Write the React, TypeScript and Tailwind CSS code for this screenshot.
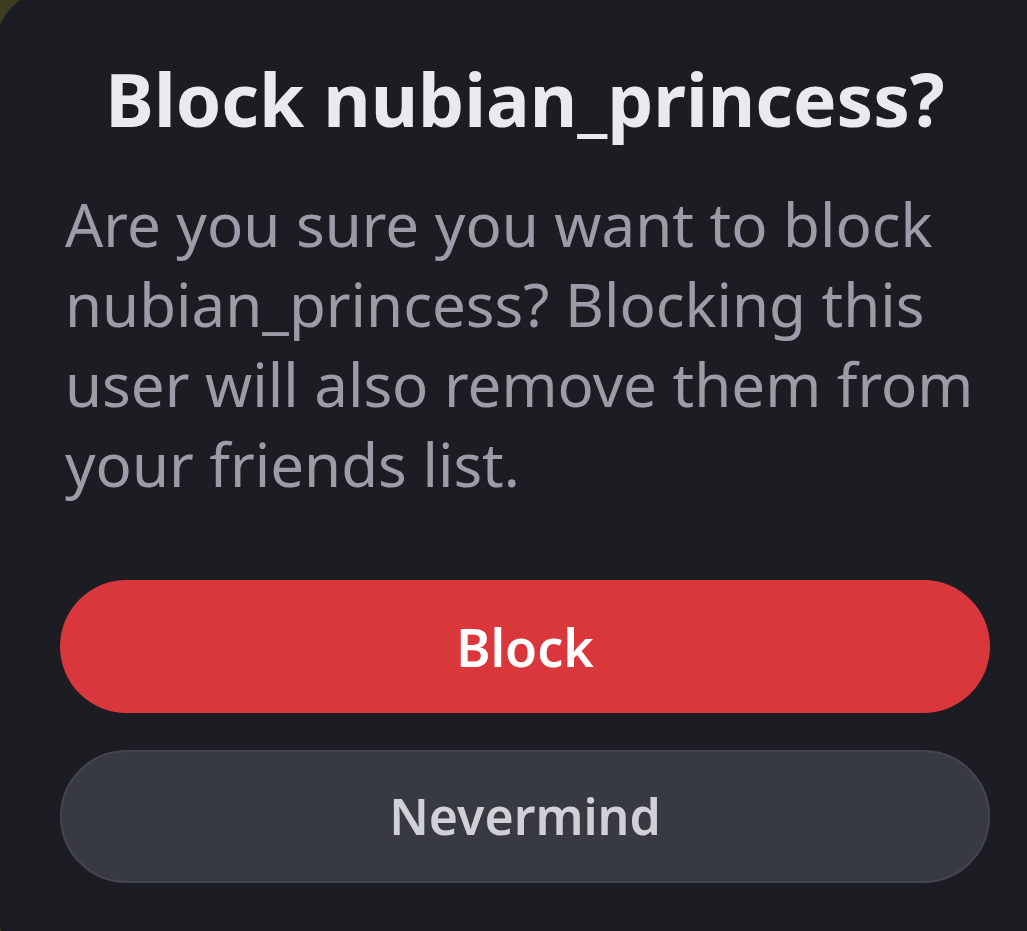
export default function App() {
  return (
    <div className="w-[1027px] h-[931px] overflow-hidden bg-[#3d3c22]">
      <div className="-ml-[5px] -mt-[11px] w-[1100px] h-[975px] rounded-[60px] bg-[#1c1d22] pl-[65px] pt-[70px] font-['Noto_Sans',sans-serif]">
        <div className="w-[930px] flex flex-col">
          <h1 className="text-center text-[73px] leading-[80px] font-bold text-[#e9eaee]">
            Block nubian_princess?
          </h1>
          <p className="mt-[45px] pl-[5px] text-[60px] leading-[80px] text-[#9b9ca8]">
            Are you sure you want to block nubian_princess? Blocking this user will also remove them from your friends list.
          </p>
          <button className="mt-[76px] h-[133px] rounded-full bg-[#da373c] text-white text-[52px] font-semibold">
            Block
          </button>
          <button className="mt-[37px] h-[133px] rounded-full bg-[#383a43] border-2 border-[#44464f] text-[#d0d1d7] text-[50px] font-semibold">
            Nevermind
          </button>
        </div>
      </div>
    </div>
  );
}
